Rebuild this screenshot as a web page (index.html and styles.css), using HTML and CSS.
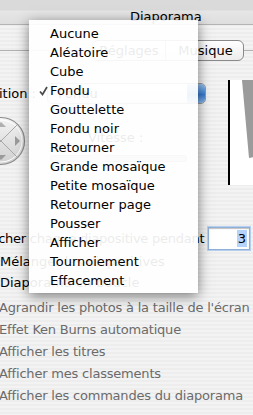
FILE: index.html
```html
<!DOCTYPE html>
<html lang="fr">
<head>
  <meta charset="UTF-8" />
  <title>Diaporama</title>
  <link rel="stylesheet" href="styles.css">
</head>
<body>
  <div class="window">
    <div class="titlebar"><span class="title">Diaporama</span></div>

    <div class="tabs-row">
      <div class="segmented">
        <span class="seg">Réglages</span>
        <span class="seg active">Musique</span>
      </div>
    </div>

    <div class="box">
      <div class="top">
        <div class="controls">
          <div class="transition-row">
            <span class="label">Transition :</span>
            <div class="popup"><span class="popup-text">Fondu</span><span class="stepper"></span></div>
          </div>
          <div class="speed-row">
            <svg class="direction" width="50" height="50" viewBox="0 0 50 50">
              <defs>
                <linearGradient id="disc" x1="0" y1="0" x2="0" y2="1">
                  <stop offset="0" stop-color="#f4f4f4"/>
                  <stop offset="1" stop-color="#cfcfcf"/>
                </linearGradient>
              </defs>
              <circle cx="25" cy="25" r="23.5" fill="url(#disc)" stroke="#8c8c8c" stroke-width="1.2"/>
              <circle cx="25" cy="25" r="21" fill="none" stroke="#fff" stroke-width="1"/>
              <path d="M9 9 L41 41 M41 9 L9 41" stroke="#a8a8a8" stroke-width="1"/>
              <path d="M39 20 L44 25 L39 30 Z" fill="#9a9a9a"/>
              <path d="M20 11 L25 6 L30 11 Z" fill="#b0b0b0"/>
              <path d="M20 39 L25 44 L30 39 Z" fill="#9a9a9a"/>
            </svg>
            <div class="speed">
              <span class="label">Vitesse :</span>
              <div class="slider"><span class="knob"></span></div>
            </div>
          </div>
        </div>
        <div class="preview">
          <svg width="33" height="105" viewBox="0 0 33 105">
            <polygon points="12,0 33,0 33,75 19,78" fill="#9b9b9b"/>
          </svg>
        </div>
      </div>

      <div class="duration-row">
        <span class="text">Afficher chaque diapositive pendant</span>
        <span class="field"><span class="sel">3</span></span>
      </div>
      <label class="check"><span class="box-check"></span>Mélanger les diapositives</label>
      <label class="check"><span class="box-check"></span>Diaporama en boucle</label>
    </div>

    <div class="options">
      <label class="check dim"><span class="box-check"></span>Agrandir les photos à la taille de l'écran</label>
      <label class="check dim"><span class="box-check"></span>Effet Ken Burns automatique</label>
      <label class="check dim"><span class="box-check"></span>Afficher les titres</label>
      <label class="check dim"><span class="box-check"></span>Afficher mes classements</label>
      <label class="check dim"><span class="box-check"></span>Afficher les commandes du diaporama</label>
    </div>
  </div>

  <ul class="menu">
    <li>Aucune</li>
    <li>Aléatoire</li>
    <li>Cube</li>
    <li class="checked">
      <svg class="tick" width="9" height="10" viewBox="0 0 9 10"><path d="M1 5.5 L3.5 8.5 L8 1" fill="none" stroke="#4a4a4a" stroke-width="1.7"/></svg>
      Fondu
    </li>
    <li>Gouttelette</li>
    <li>Fondu noir</li>
    <li>Retourner</li>
    <li>Grande mosaïque</li>
    <li>Petite mosaïque</li>
    <li>Retourner page</li>
    <li>Pousser</li>
    <li>Afficher</li>
    <li>Tournoiement</li>
    <li>Effacement</li>
  </ul>
</body>
</html>
```

FILE: styles.css
```css
body {
  margin: 0;
  width: 253px;
  height: 415px;
  overflow: hidden;
  font-family: "DejaVu Sans", sans-serif;
  font-size: 13px;
  color: #000;
  white-space: nowrap;
  background: repeating-linear-gradient(#ededed 0 2px, #f3f3f3 2px 4px);
}

.window {
  margin-left: -60px;
  width: 313px;
}

.titlebar {
  height: 24px;
  border-bottom: 1px solid #b4b4b4;
  background: linear-gradient(#dadada 0, #dadada 10px, #e6e6e6 11px, #dedede);
}
.title {
  display: block;
  padding-left: 190px;
  padding-top: 9px;
  line-height: 15px;
}

/* tab control sits on the group box border */
.tabs-row {
  margin-top: 15px;
  height: 20px;
  position: relative;
}
.tabs-row::before {
  content: "";
  position: absolute;
  left: 0;
  right: 0;
  top: 10px;
  border-top: 1px solid #b0b0b0;
}
.segmented {
  position: relative;
  display: flex;
  margin-left: 152px;
  width: 150px;
  height: 19px;
  border: 1px solid #8a8a8a;
  border-radius: 6px;
  background: linear-gradient(#ffffff, #ececec);
  overflow: hidden;
}
.seg {
  line-height: 19px;
  text-align: center;
}
.seg:first-child {
  width: 72px;
  border-right: 1px solid #a0a0a0;
}
.seg.active {
  flex: 1;
  padding-left: 2px;
}

.box {
  padding-top: 20px;
}
.top {
  display: flex;
  height: 105px;
}
.controls {
  flex: 1;
}
.transition-row {
  display: flex;
  align-items: center;
  height: 22px;
  margin-top: 2px;
}
.transition-row .label {
  width: 96px;
  text-align: right;
}
.popup {
  display: flex;
  margin-left: 11px;
  width: 157px;
  height: 19px;
  border-radius: 5px;
  background: linear-gradient(#fdfdfd, #e4e4e4);
  border: 1px solid #9a9a9a;
  overflow: hidden;
}
.popup-text {
  flex: 1;
  padding-left: 10px;
  line-height: 19px;
}
.stepper {
  width: 18px;
  background: linear-gradient(#9cc3ef, #3f86d9 50%, #2f73cb 51%, #8ab9ee);
}

.speed-row {
  display: flex;
  margin-top: 12px;
}
.direction {
  margin-left: 36px;
}
.speed {
  margin-left: 62px;
  padding-top: 14px;
  width: 140px;
}
.slider {
  margin-top: 10px;
  margin-left: -38px;
  height: 5px;
  border-radius: 3px;
  background: #c8c8c8;
  border: 1px solid #a8a8a8;
  position: relative;
  width: 135px;
}
.knob {
  position: absolute;
  left: 40px;
  top: -6px;
  width: 14px;
  height: 16px;
  border-radius: 50%;
  background: #d8d8d8;
}

.preview {
  width: 33px;
  height: 105px;
  border-left: 2px solid #000;
  background: #fff;
}
.preview svg {
  display: block;
}

.duration-row {
  display: flex;
  align-items: center;
  margin-top: 41px;
  padding-left: 38px;
  height: 25px;
}
.duration-row .text {
  flex: 1;
  letter-spacing: -0.25px;
}
.field {
  width: 38px;
  height: 21px;
  margin-right: 3px;
  border: 1px solid #8fb0d8;
  box-shadow: 0 0 0 1px #b7cfee, inset 0 1px 1px rgba(0, 0, 0, 0.25);
  background: #fff;
  display: flex;
  justify-content: flex-end;
  align-items: center;
  padding-right: 2px;
}
.sel {
  background: #b5d4fd;
  padding: 1px 1px 0;
  line-height: 16px;
}

.check {
  display: flex;
  align-items: center;
  height: 21px;
  padding-left: 40px;
}
.box-check {
  width: 13px;
  height: 13px;
  margin-right: 7px;
  flex: none;
}

.options {
  margin-top: 4px;
}
.options .check {
  height: 21.8px;
}
.dim {
  color: #6b6b6b;
  padding-left: 39px;
  letter-spacing: -0.2px;
}

/* open transition menu floats above the pane */
.menu {
  position: absolute;
  left: 29px;
  top: 20px;
  width: 169px;
  margin: 0;
  padding: 4px 0 3px;
  list-style: none;
  background: rgba(255, 255, 255, 0.92);
  box-shadow: 0 3px 12px rgba(0, 0, 0, 0.5);
}
.menu li {
  position: relative;
  height: 19px;
  line-height: 19px;
  padding-left: 21px;
}
.tick {
  position: absolute;
  left: 10px;
  top: 5px;
}
```
